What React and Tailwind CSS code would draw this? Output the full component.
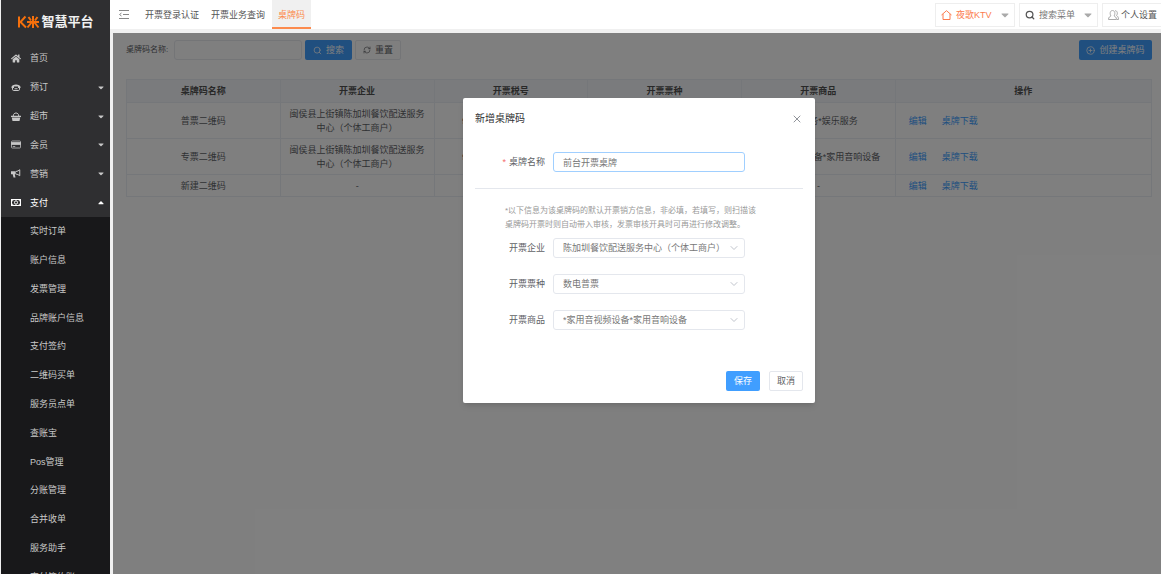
import React, { useState } from 'react';
import { FaCaretDown, FaCaretUp, FaHome } from 'react-icons/fa';
import { Search, RefreshCw, CirclePlus, X, ChevronDown } from 'lucide-react';

const PhoneIcon = ({ className }) => (
  <svg viewBox="0 0 20 16" className={className} fill="none" stroke="currentColor" strokeWidth="2">
    <path d="M1 7C1 0 19 0 19 7v2h-5V6H6v3H1z" fill="currentColor" stroke="none" />
    <path d="M3 9v2.500Q3 14 5.500 14h9q2.500 0 2.500-2.500V9M7 10.500h6" />
  </svg>
);

const BasketIcon = ({ className }) => (
  <svg viewBox="0 0 20 18" className={className} fill="none" stroke="currentColor" strokeWidth="2">
    <path d="M4.500 8C4.500 0 15.500 0 15.500 8" />
    <path d="M0 7.500h20V10H0zM1.500 11h17L17 18H3z" fill="currentColor" stroke="none" />
  </svg>
);

const CardIcon = ({ className }) => (
  <svg viewBox="0 0 20 16" className={className} fill="none" stroke="currentColor" strokeWidth="1.5">
    <rect x="1" y="1" width="18" height="14" rx="1.5" />
    <path d="M1 4h18v4H1z" fill="currentColor" />
    <path d="M3.500 12h5" />
  </svg>
);

const HornIcon = ({ className }) => (
  <svg viewBox="0 0 20 18" className={className} fill="none" stroke="currentColor" strokeWidth="2">
    <path d="M0 4.500h9.500v6H7.500L9 17H5L3.500 10.500H0z" fill="currentColor" stroke="none" />
    <path d="M10 5q4-.5 7.500-3.500v12Q14 10.500 10 10" />
  </svg>
);

const MoneyIcon = ({ className }) => (
  <svg viewBox="0 0 20 14" className={className} fill="none" stroke="currentColor" strokeWidth="2">
    <rect x="1" y="1" width="18" height="12" />
    <ellipse cx="10" cy="7" rx="3" ry="3.5" />
    <path d="M2 3.500h2.500M15.500 3.500H18M2 10.500h2.500M15.500 10.500H18" />
  </svg>
);

const menuItems = [
  { label: '首页', icon: FaHome },
  { label: '预订', icon: PhoneIcon, caret: 'down' },
  { label: '超市', icon: BasketIcon, caret: 'down' },
  { label: '会员', icon: CardIcon, caret: 'down' },
  { label: '营销', icon: HornIcon, caret: 'down' },
  { label: '支付', icon: MoneyIcon, caret: 'up', active: true },
];

const subItems = [
  '实时订单', '账户信息', '发票管理', '品牌账户信息', '支付签约', '二维码买单', '服务员点单',
  '查账宝', 'Pos管理', '分账管理', '合并收单', '服务助手', '支付签约账',
];

const columns = ['桌牌码名称', '开票企业', '开票税号', '开票票种', '开票商品'];

const rows = [
  { name: '普票二维码', company: '闽侯县上街镇陈加圳餐饮配送服务中心（个体工商户）', taxNo: '92350121MA32XK4L7Q', type: '数电普票', goods: '*生活服务*娱乐服务' },
  { name: '专票二维码', company: '闽侯县上街镇陈加圳餐饮配送服务中心（个体工商户）', taxNo: '92350121MA32XK4L7Q', type: '数电专票', goods: '*家用音视频设备*家用音响设备' },
  { name: '新建二维码', company: '-', taxNo: '-', type: '-', goods: '-' },
];

const Sidebar = () => (
  <aside className="w-[109px] shrink-0 overflow-hidden bg-[#2f2f31] text-[#c8c8c8]">
    <div className="flex h-11 items-center justify-center text-[13px] font-bold text-[#f0f0f0]">
      <svg viewBox="0 0 23 14" className="mr-px h-[14px] w-[23px]" fill="none" stroke="#f5700c" strokeWidth="2">
        <path d="M2 1.5v11M8.500 1.500 3.500 7l5.500 5.500" />
        <path d="M10 7h12M16 1v12M11.500 2l2.500 3.500M20.500 2 18 5.500M14.500 7.500 10.500 12.500M17.500 7.500l4 5" />
      </svg>
      智慧平台
    </div>
    <nav>
      <ul className="grid h-[173px] auto-rows-fr">
        {menuItems.map(({ label, icon: Icon, caret, active }) => (
          <li key={label}>
            <a href="#" className={`flex h-full items-center pr-[6px] pl-[10px] ${active ? 'text-white' : ''}`}>
              <Icon className="h-[9px] w-[10px]" />
              <span className="ml-[9px] flex-1">{label}</span>
              {caret === 'down' && <FaCaretDown className="h-[9px] w-[6px]" />}
              {caret === 'up' && <FaCaretUp className="h-[9px] w-[6px]" />}
            </a>
          </li>
        ))}
      </ul>
      <ul className="grid h-[374px] auto-rows-fr bg-[#18181a]">
        {subItems.map((label) => (
          <li key={label}>
            <a href="#" className="flex h-full items-center pl-[29px]">{label}</a>
          </li>
        ))}
      </ul>
    </nav>
  </aside>
);

const TopBar = () => (
  <header className="flex h-[29px] shrink-0 items-center bg-white text-[#555]">
    <button type="button" aria-label="收起菜单" className="mr-4 ml-[9px]">
      <svg viewBox="0 0 10 9" className="h-[9px] w-[10px]" stroke="#888" fill="none">
        <path d="M0 .5h10M4 4.500h6M0 8.500h10M2.500 3 .5 4.500l2 1.500" />
      </svg>
    </button>
    <nav className="flex h-full flex-1">
      <a href="#" className="flex items-center">开票登录认证</a>
      <a href="#" className="ml-3 flex items-center">开票业务查询</a>
      <a href="#" className="ml-[7px] flex items-center border-b-2 border-[#fc8b4e] bg-[#f0f0f0] px-[6px] pt-[2px] text-[#fc8b4e]">桌牌码</a>
    </nav>
    <div className="flex h-6 gap-1 whitespace-nowrap">
      <button type="button" className="flex w-20 items-center border border-[#eee] px-[5px] text-[#fc7b4e]">
        <svg viewBox="0 0 11 10" className="mr-1 h-[10px] w-[11px]" stroke="currentColor" fill="none">
          <path d="M.5 5 5.500.700 10.500 5M2 4v5.500h7V4" />
        </svg>
        夜歌KTV
        <FaCaretDown className="ml-auto h-3 w-2 text-[#aaa]" />
      </button>
      <button type="button" className="flex w-[79px] items-center border border-[#eee] px-[5px] text-[#777]">
        <Search className="mr-1 size-[10px] text-[#555]" strokeWidth={3} />
        搜索菜单
        <FaCaretDown className="ml-auto h-3 w-2 text-[#aaa]" />
      </button>
      <button type="button" className="flex w-[59px] items-center border border-r-0 border-[#eee] pl-[5px]">
        <svg viewBox="0 0 11 10" className="mr-[2px] h-[10px] w-[11px] shrink-0" stroke="#aaa" fill="none">
          <path d="M.5 9.500C.5 7 2 6.500 3 6 1.500 4 2 .5 4.500.5S7.500 4 6 6c1 .5 2.500 1 2.500 3.500zM7 .7c2.500 0 3 3 1.500 4.800 1 .5 2 1.500 2 4H9" />
        </svg>
        个人设置
      </button>
    </div>
  </header>
);

const RowActions = () => (
  <td className="border border-[#ebeef5] px-[13px] text-left text-[#409eff]">
    <a href="#" className="mr-[15px]">编辑</a>
    <a href="#">桌牌下载</a>
  </td>
);

const CodeTable = () => (
  <table className="mt-[19px] w-full table-fixed border-collapse text-center leading-[14px] text-[#606266]">
    <colgroup>
      <col className="w-[15%]" />
      <col className="w-[15%]" />
      <col className="w-[15%]" />
      <col className="w-[15%]" />
      <col className="w-[15%]" />
      <col className="w-[25%]" />
    </colgroup>
    <thead className="bg-[#f5f7fa] text-[#515151]">
      <tr className="h-[23px]">
        {columns.map((title) => (
          <th key={title} className="border border-[#ebeef5] font-bold">{title}</th>
        ))}
        <th className="border border-[#ebeef5] font-bold">操作</th>
      </tr>
    </thead>
    <tbody>
      {rows.map((row) => (
        <tr key={row.name} className={row.company === '-' ? 'h-[22px]' : 'h-9'}>
          <td className="border border-[#ebeef5]">{row.name}</td>
          <td className="border border-[#ebeef5] px-[8px]">{row.company}</td>
          <td className="border border-[#ebeef5]">{row.taxNo}</td>
          <td className="border border-[#ebeef5]">{row.type}</td>
          <td className="border border-[#ebeef5]">{row.goods}</td>
          <RowActions />
        </tr>
      ))}
    </tbody>
  </table>
);

const SelectField = ({ id, label, options, alignEnd }) => (
  <div className="mb-4 flex items-center">
    <label htmlFor={id} className="w-[70px] pr-2 text-right text-[#606266]">{label}</label>
    <div className="relative w-48">
      <select
        id={id}
        className={`h-5 w-full appearance-none rounded-[3px] border border-[#e4e7ed] bg-white pr-[22px] pl-[9px] text-[#777] ${alignEnd ? 'text-right' : ''}`}
      >
        {options.map((option) => (
          <option key={option}>{option}</option>
        ))}
      </select>
      <ChevronDown className="pointer-events-none absolute top-[4px] right-[5px] size-3 text-[#c0c4cc]" strokeWidth={2} />
    </div>
  </div>
);

const CreateDialog = () => {
  const [name, setName] = useState('前台开票桌牌');

  return (
    <div role="dialog" aria-labelledby="dialog-title" className="w-[352px] rounded-[2px] bg-white px-3 pb-3 shadow-md">
      <div className="flex h-[41px] items-center justify-between">
        <h2 id="dialog-title" className="text-[10px] text-[#303133]">新增桌牌码</h2>
        <button type="button" aria-label="关闭" className="text-[#909399]">
          <X className="size-3" strokeWidth={2} />
        </button>
      </div>
      <form>
        <div className="flex items-center border-b border-[#e4e7ed] pt-[13px] pb-4">
          <label htmlFor="code-name" className="w-[78px] pr-2 text-right text-[#606266]">
            <span className="mr-[3px] text-[#f56c6c]">*</span>桌牌名称
          </label>
          <input
            id="code-name"
            autoFocus
            value={name}
            onChange={(e) => setName(e.target.value)}
            className="h-5 w-48 rounded-[3px] border border-[#a0cfff] px-[9px] text-[#777] outline-none"
          />
        </div>
        <p className="mt-[15px] mr-[42px] mb-[6px] ml-[30px] text-[8px] leading-[14px] text-[#999]">
          *以下信息为该桌牌码的默认开票销方信息，非必填，若填写，则扫描该桌牌码开票时则自动带入审核，发票审核开具时可再进行修改调整。
        </p>
        <div className="pl-2">
          <SelectField id="company" label="开票企业" options={['陈加圳餐饮配送服务中心（个体工商户）']} alignEnd />
          <SelectField id="type" label="开票票种" options={['数电普票', '数电专票']} />
          <SelectField id="goods" label="开票商品" options={['*家用音视频设备*家用音响设备']} />
        </div>
        <div className="mt-[41px] flex justify-end gap-[9px]">
          <button type="button" className="h-5 w-[34px] rounded-[2px] bg-[#409eff] text-white">保存</button>
          <button type="button" className="h-5 w-[34px] rounded-[2px] border border-[#e4e7ed] text-[#606266]">取消</button>
        </div>
      </form>
    </div>
  );
};

const App = () => {
  return (
    <div className="flex h-screen overflow-hidden bg-[#f0f0f0] pl-px font-['Liberation_Sans','Noto_Sans_CJK_SC',sans-serif] text-[9px] leading-3">
      <Sidebar />
      <div className="flex min-w-0 flex-1 flex-col">
        <TopBar />
        <main className="relative mt-1 ml-[3px] flex-1 bg-white pt-[7px] pr-[9px] pl-[13px]">
          {/* Search bar */}
          <div className="flex h-5 items-center">
            <label htmlFor="search-name" className="w-12 text-[8px] text-[#606266]">桌牌码名称:</label>
            <input id="search-name" className="h-5 w-32 rounded-[3px] border border-[#e8eaef] px-2" />
            <button type="button" className="ml-[3px] flex h-5 w-[47px] items-center justify-center gap-1 rounded-[2px] bg-[#409eff] text-white">
              <Search className="size-[9px]" />搜索
            </button>
            <button type="button" className="ml-[3px] flex h-5 w-[46px] items-center justify-center gap-1 rounded-[2px] border border-[#e8eaef] text-[#606266]">
              <RefreshCw className="size-[8px]" />重置
            </button>
            <button type="button" className="ml-auto flex h-5 w-[73px] items-center justify-center gap-1 rounded-[2px] bg-[#409eff] text-white">
              <CirclePlus className="size-[9px]" />创建桌牌码
            </button>
          </div>

          <CodeTable />

          {/* Modal */}
          <div className="absolute inset-0 flex items-start justify-center bg-black/50 pt-[65px] pl-1">
            <CreateDialog />
          </div>
        </main>
      </div>
    </div>
  );
};

export default App;
